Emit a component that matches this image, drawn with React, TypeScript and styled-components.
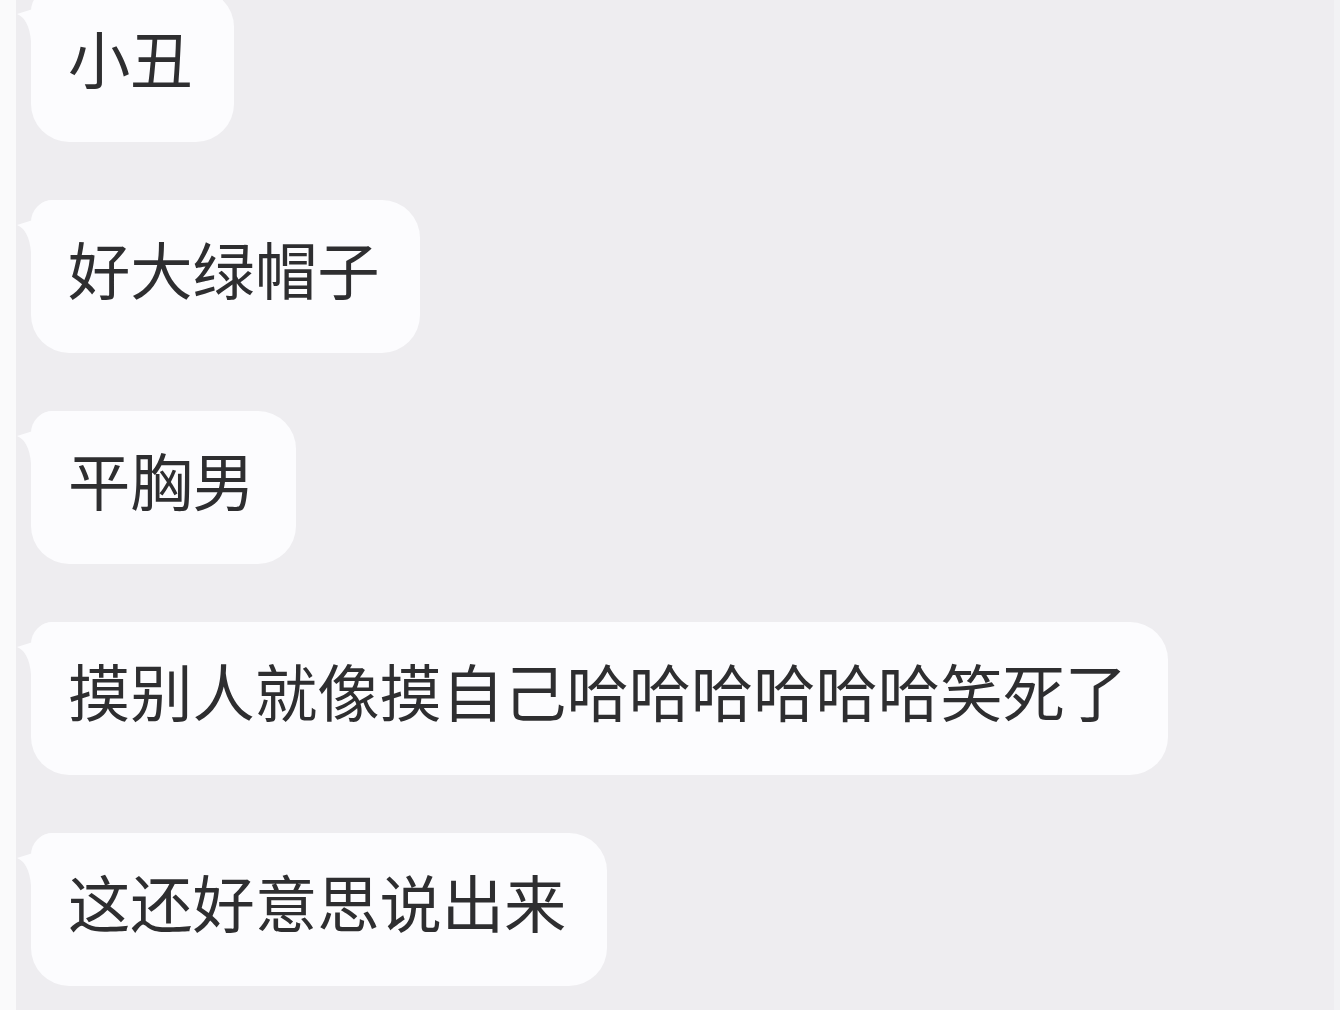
import React from "react";
import styled, { createGlobalStyle } from "styled-components";

const GlobalStyle = createGlobalStyle`
  html, body {
    margin: 0;
    padding: 0;
    background: #eeedf0;
  }
  body {
    font-family: "Noto Sans CJK SC", "Noto Sans", sans-serif;
  }
`;

const Screen = styled.div`
  width: 1340px;
  height: 1010px;
  display: flex;
  overflow: hidden;
  background: #eeedf0;
`;

const LeftEdge = styled.div`
  width: 16px;
  flex: none;
  background: #fafafb;
`;

const RightEdge = styled.div`
  width: 6px;
  flex: none;
  background: #f2f2f4;
`;

const Chat = styled.div`
  flex: 1;
  display: flex;
  flex-direction: column;
  align-items: flex-start;
  gap: 58px;
  padding-left: 15px;
  margin-top: -11px;
`;

const Bubble = styled.div`
  position: relative;
  height: 153px;
  display: flex;
  align-items: center;
  padding: 0 41px 0 37px;
  background: #fcfcfe;
  border-radius: 22px 38px 38px 38px;
  color: #2e2e30;
  font-size: 62.3px;
  line-height: 1;
  white-space: nowrap;
  letter-spacing: 0;
`;

const Tail = styled.svg`
  position: absolute;
  left: -15px;
  top: 0;
  width: 45px;
  height: 55px;
  overflow: visible;
`;

const Text = styled.span`
  display: block;
  transform: translateY(-8px);
`;

const messages = [
  "小丑",
  "好大绿帽子",
  "平胸男",
  "摸别人就像摸自己哈哈哈哈哈哈笑死了",
  "这还好意思说出来",
];

export default function App() {
  return (
    <>
      <GlobalStyle />
      <Screen>
        <LeftEdge />
        <Chat>
          {messages.map((m, i) => (
            <Bubble key={i}>
              <Tail viewBox="0 0 45 55">
                <path
                  d="M45 0 L37 0 Q20 0 17 20 L1 25 Q13 30 15 52 L45 52 Z"
                  fill="#fcfcfe"
                />
              </Tail>
              <Text>{m}</Text>
            </Bubble>
          ))}
        </Chat>
        <RightEdge />
      </Screen>
    </>
  );
}
